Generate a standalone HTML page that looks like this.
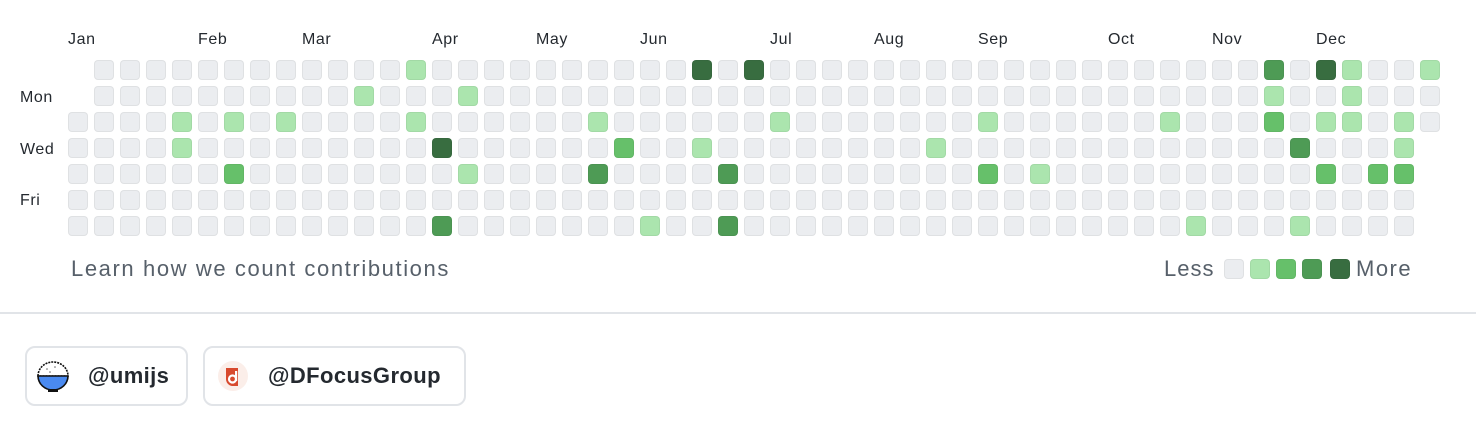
<!DOCTYPE html>
<html><head><meta charset="utf-8"><style>
body{margin:0;width:1476px;height:422px;background:#fff;font-family:"Liberation Sans",sans-serif;position:relative;overflow:hidden}
.c{position:absolute;width:20px;height:20px;border-radius:4px;box-sizing:border-box;border:1px solid rgba(27,31,35,0.06)}
.t{position:absolute;font-size:16px;color:#24292f;line-height:1;letter-spacing:0.6px}
.m{top:32px}
.btn{position:absolute;top:346px;height:60px;border:2px solid #e1e4e8;border-radius:10px;box-sizing:border-box}
.bt{position:absolute;top:17px;font-size:22px;font-weight:bold;color:#24292f;line-height:1;letter-spacing:0.4px}
.lg{position:absolute;top:258px;font-size:22px;color:#57606a;line-height:1}
</style></head><body>
<div class="t m" style="left:68px">Jan</div>
<div class="t m" style="left:198px">Feb</div>
<div class="t m" style="left:302px">Mar</div>
<div class="t m" style="left:432px">Apr</div>
<div class="t m" style="left:536px">May</div>
<div class="t m" style="left:640px">Jun</div>
<div class="t m" style="left:770px">Jul</div>
<div class="t m" style="left:874px">Aug</div>
<div class="t m" style="left:978px">Sep</div>
<div class="t m" style="left:1108px">Oct</div>
<div class="t m" style="left:1212px">Nov</div>
<div class="t m" style="left:1316px">Dec</div>
<div class="t" style="left:20px;top:90px">Mon</div>
<div class="t" style="left:20px;top:142px">Wed</div>
<div class="t" style="left:20px;top:193px">Fri</div>
<div id="g"></div>
<div class="lg" style="left:71px;letter-spacing:1.6px">Learn how we count contributions</div>
<div class="lg" style="left:1164px;letter-spacing:1px">Less</div>
<div class="c" style="left:1224px;top:259px;background:#ebedf0"></div>
<div class="c" style="left:1250px;top:259px;background:#abe5ae"></div>
<div class="c" style="left:1276px;top:259px;background:#66c06a"></div>
<div class="c" style="left:1302px;top:259px;background:#4e9b55"></div>
<div class="c" style="left:1330px;top:259px;background:#386d40"></div>
<div class="lg" style="left:1356px;letter-spacing:1.5px">More</div>
<div style="position:absolute;left:0;top:312px;width:1476px;height:2px;background:#e1e4e8"></div>
<div class="btn" style="left:25px;width:163px">
<svg style="position:absolute;left:8px;top:10px" width="36" height="36" viewBox="0 0 36 36">
<path d="M3 18 A15 14 0 0 1 33 18 Z" fill="#fff" stroke="#111" stroke-width="1.6" stroke-dasharray="2 1"/>
<path d="M3 18 H33 A15 14 0 0 1 3 18 Z" fill="#4a8af0" stroke="#111" stroke-width="1.6"/>
<rect x="13" y="31" width="10" height="3" fill="#111"/>
<circle cx="12" cy="11" r="0.8" fill="#666"/><circle cx="20" cy="9" r="0.8" fill="#666"/><circle cx="15" cy="14" r="0.8" fill="#666"/>
</svg>
<div class="bt" style="left:61px">@umijs</div></div>
<div class="btn" style="left:203px;width:263px">
<svg style="position:absolute;left:12px;top:12px" width="32" height="32" viewBox="0 0 32 32">
<circle cx="16" cy="16" r="15" fill="#fbeee9"/>
<path d="M9 8 H21 V26 H15 A7 7 0 0 1 9 19 Z" fill="#d84a2e"/>
<circle cx="15.5" cy="19" r="3.5" fill="none" stroke="#fff" stroke-width="2.2"/>
<rect x="18" y="11" width="2.2" height="10" fill="#fff"/>
</svg>
<div class="bt" style="left:63px">@DFocusGroup</div></div>
<script>
var col={1:"#abe5ae",2:"#66c06a",3:"#4e9b55",4:"#386d40"};
var hot={
0:{13:1,24:4,26:4,46:3,48:4,49:1,52:1},
1:{11:1,15:1,46:1,49:1},
2:{4:1,6:1,8:1,13:1,20:1,27:1,35:1,42:1,46:2,48:1,49:1,51:1},
3:{4:1,14:4,21:2,24:1,33:1,47:3,51:1},
4:{6:2,15:1,20:3,25:3,35:2,37:1,48:2,50:2,51:2},
5:{},
6:{14:3,22:1,25:3,43:1,47:1}};
var h="";
for(var c=0;c<53;c++)for(var r=0;r<7;r++){
if(c==0&&r<2)continue;if(c==52&&r>2)continue;
var l=hot[r][c]||0;
h+='<div class="c" style="left:'+(68+c*26)+'px;top:'+(60+r*26)+'px;background:'+(l?col[l]:"#ebedf0")+'"></div>';}
document.getElementById("g").innerHTML=h;
</script>
</body></html>
